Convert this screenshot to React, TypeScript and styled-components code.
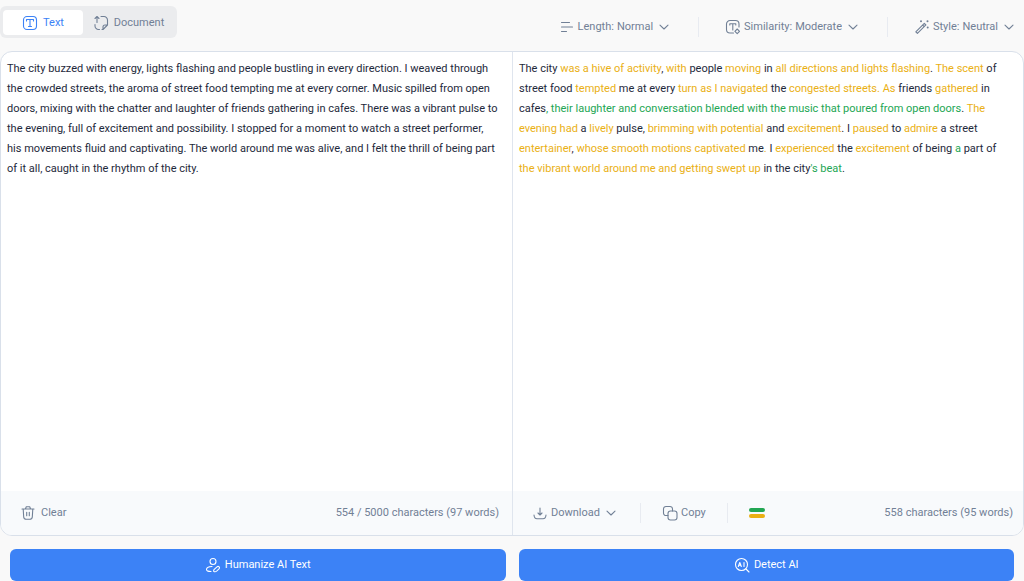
import React from "react";
import styled, { createGlobalStyle } from "styled-components";

const GlobalStyle = createGlobalStyle`
  *, *::before, *::after { box-sizing: border-box; }
  body {
    margin: 0;
    background: #f9f9f9;
    color: #1e293b;
    font-family: Roboto, "Liberation Sans", sans-serif;
    font-size: 11px;
    line-height: 20px;
  }
  button, select, textarea { font: inherit; color: inherit; }
`;

const Page = styled.main`
  display: flex;
  flex-direction: column;
  min-height: 100vh;
`;

const Toolbar = styled.header`
  display: flex;
  justify-content: space-between;
  align-items: flex-start;
  height: 51px;
  padding: 6px 7px 0 0;
  color: #718096;
`;

const Tabs = styled.div`
  display: flex;
  padding: 4px 3px 3px;
  border-radius: 6px;
  background: #ebecee;
`;

const Tab = styled.button<{ $active?: boolean }>`
  display: flex;
  align-items: center;
  justify-content: center;
  gap: 5px;
  height: 25px;
  width: ${(p) => (p.$active ? "80px" : "91px")};
  padding: 0;
  border: 0;
  border-radius: 4px;
  background: ${(p) => (p.$active ? "#ffffff" : "transparent")};
  color: ${(p) => (p.$active ? "#3c82f6" : "#718096")};
  cursor: pointer;
`;

const Filters = styled.div`
  display: flex;
  align-items: center;
  padding-top: 11px;
`;

const Filter = styled.label`
  display: flex;
  align-items: center;
  gap: 3px;
`;

const Select = styled.select`
  appearance: none;
  field-sizing: content;
  height: 20px;
  padding: 0;
  border: 0;
  background: transparent;
  cursor: pointer;
`;

const Divider = styled.span<{ $gap: number }>`
  width: 1px;
  height: 20px;
  margin: 0 ${(p) => p.$gap}px;
  background: #e8ebf1;
`;

const Icon = styled.svg`
  flex: none;
  width: 16px;
  height: 16px;
  fill: none;
  stroke: currentColor;
  stroke-width: 1.1;
  stroke-linecap: round;
  stroke-linejoin: round;
`;

const Card = styled.section`
  flex: 1;
  display: grid;
  grid-template-columns: 1fr 1fr;
  overflow: hidden;
  border: 1px solid #d9e0ea;
  border-radius: 12px;
  background: #ffffff;
`;

const Pane = styled.div`
  display: flex;
  flex-direction: column;
  min-width: 0;
  & + & { border-left: 1px solid #dfe5ee; }
`;

const Editor = styled.textarea`
  flex: 1;
  width: 100%;
  padding: 7px 13px 7px 6px;
  border: 0;
  outline: 0;
  resize: none;
  background: transparent;
`;

const Result = styled.p`
  flex: 1;
  margin: 0;
  padding: 7px 13px 7px 6px;
`;

const Mark = styled.span<{ $tone: "amber" | "green" }>`
  color: ${(p) => (p.$tone === "amber" ? "#eab014" : "#22a653")};
`;

const Footer = styled.footer<{ $end: number }>`
  display: flex;
  align-items: center;
  height: 44px;
  padding: 0 ${(p) => p.$end}px 0 19px;
  background: #f8fafc;
  color: #718096;
`;

const Action = styled.button<{ $gap?: number }>`
  display: flex;
  align-items: center;
  gap: ${(p) => p.$gap ?? 3}px;
  padding: 0;
  border: 0;
  background: transparent;
  cursor: pointer;
`;

const Count = styled.span`
  margin-left: auto;
`;

const Legend = styled.span`
  display: grid;
  gap: 2px;
  width: 16px;
`;

const Bar = styled.i<{ $color: string }>`
  height: 4px;
  border-radius: 2px;
  background: ${(p) => p.$color};
`;

const Buttons = styled.div`
  display: grid;
  grid-template-columns: 1fr 1fr;
  gap: 13px;
  padding: 13px 10px 0;
`;

const Primary = styled.button`
  display: flex;
  align-items: center;
  justify-content: center;
  gap: 4px;
  height: 32px;
  border: 0;
  border-radius: 6px;
  background: #3c82f6;
  color: #ffffff;
  cursor: pointer;
`;

const Chevron = () => (
  <Icon viewBox="0 0 16 16" aria-hidden="true">
    <path d="M4 6.2 8 10l4-3.8" />
  </Icon>
);

const source =
  "The city buzzed with energy, lights flashing and people bustling in every direction. I weaved through the crowded streets, the aroma of street food tempting me at every corner. Music spilled from open doors, mixing with the chatter and laughter of friends gathering in cafes. There was a vibrant pulse to the evening, full of excitement and possibility. I stopped for a moment to watch a street performer, his movements fluid and captivating. The world around me was alive, and I felt the thrill of being part of it all, caught in the rhythm of the city.";

type Run = [string, ("amber" | "green")?];

const result: Run[] = [
  ["The city "], ["was a hive of activity", "amber"], [", "], ["with", "amber"], [" people "],
  ["moving", "amber"], [" in "], ["all directions and lights flashing", "amber"], [". "],
  ["The scent", "amber"], [" of street food "], ["tempted", "amber"], [" me at every "],
  ["turn as I navigated", "amber"], [" the "], ["congested streets. As", "amber"], [" friends "],
  ["gathered", "amber"], [" in cafes"],
  [", their laughter and conversation blended with the music that poured from open doors", "green"],
  [". "], ["The evening had", "amber"], [" a "], ["lively", "amber"], [" pulse, "],
  ["brimming with potential", "amber"], [" and "], ["excitement", "amber"], [". I "],
  ["paused", "amber"], [" to "], ["admire", "amber"], [" a street "], ["entertainer", "amber"],
  [", "], ["whose smooth motions captivated", "amber"], [" me"], [".", "amber"], [" I "],
  ["experienced", "amber"], [" the "], ["excitement", "amber"], [" of being "], ["a", "green"],
  [" part of "], ["the vibrant world around me and getting swept up", "amber"],
  [" in the city"], ["'s beat", "green"], ["."],
];

export default function App() {
  return (
    <Page>
      <GlobalStyle />
      <Toolbar>
        <Tabs role="tablist">
          <Tab $active role="tab" aria-selected="true">
            <Icon viewBox="0 0 16 16" aria-hidden="true">
              <rect x="1.5" y="1.5" width="13" height="13" rx="3.5" />
              <path d="M4.5 6V4.5h7V6M8 4.5v7M6.5 11.5h3" />
            </Icon>
            Text
          </Tab>
          <Tab role="tab" aria-selected="false">
            <Icon viewBox="0 0 16 16" aria-hidden="true">
              <path d="M4 7.5v-6M2 3.5l2-2 2 2M8 1.5h3A3.5 3.5 0 0 1 14.5 5v5L10 14.5H9M2 9.5V11a3.5 3.5 0 0 0 3.5 3.5h1M14.5 10H12a2 2 0 0 0-2 2v2.5" />
            </Icon>
            Document
          </Tab>
        </Tabs>
        <Filters>
          <Filter>
            <Icon viewBox="0 0 16 16" aria-hidden="true">
              <path d="M2.5 3.5h8M2.5 8h11M2.5 12.5h5" />
            </Icon>
            <span>Length:</span>
            <Select defaultValue="Normal"><option>Normal</option></Select>
            <Chevron />
          </Filter>
          <Divider $gap={26} />
          <Filter>
            <Icon viewBox="0 0 16 16" aria-hidden="true">
              <path d="M8.5 14H5a3.5 3.5 0 0 1-3.5-3.5V5A3.5 3.5 0 0 1 5 1.5h5.5A3.5 3.5 0 0 1 14 5v3M4.8 6V4.7h6V6M7.8 4.7V11" />
              <path d="m12.2 10 2.3 2.3-2.3 2.3-2.3-2.3z" />
            </Icon>
            <span>Similarity:</span>
            <Select defaultValue="Moderate"><option>Moderate</option></Select>
            <Chevron />
          </Filter>
          <Divider $gap={26} />
          <Filter>
            <Icon viewBox="0 0 16 16" aria-hidden="true">
              <path d="m1.8 12.8 8.5-8.5 1.6 1.6-8.5 8.5zM8.6 6l1.6 1.6" />
              <path strokeWidth="2" d="M7 2.3h.01M13.5 2.2h.01M13.7 8.5h.01" />
            </Icon>
            <span>Style:</span>
            <Select defaultValue="Neutral"><option>Neutral</option></Select>
            <Chevron />
          </Filter>
        </Filters>
      </Toolbar>

      <Card>
        <Pane>
          <Editor aria-label="Source text" spellCheck={false} defaultValue={source} />
          <Footer $end={13}>
            <Action $gap={5}>
              <Icon viewBox="0 0 16 16" aria-hidden="true">
                <path d="M2 4h12M5.5 3.8l.8-2h3.4l.8 2M3.2 4l.5 8a2.5 2.5 0 0 0 2.5 2.3h3.6a2.5 2.5 0 0 0 2.5-2.3l.5-8M6.7 7.2v3.6M9.3 7.2v3.6" />
              </Icon>
              Clear
            </Action>
            <Count>554 / 5000 characters (97 words)</Count>
          </Footer>
        </Pane>
        <Pane>
          <Result>
            {result.map(([text, tone], i) =>
              tone ? <Mark key={i} $tone={tone}>{text}</Mark> : text
            )}
          </Result>
          <Footer $end={10}>
            <Action aria-haspopup="menu">
              <Icon viewBox="0 0 16 16" aria-hidden="true">
                <path d="M8 3v7M6 8l2 2 2-2M2 10c.2 2.5 1 3.7 3 3.7h6c2 0 2.8-1.2 3-3.7" />
              </Icon>
              Download
              <Chevron />
            </Action>
            <Divider $gap={21} />
            <Action>
              <Icon viewBox="0 0 16 16" aria-hidden="true">
                <rect x="6" y="6" width="9" height="9" rx="2.5" />
                <path d="M6 10.5H4A2.5 2.5 0 0 1 1.5 8V4A2.5 2.5 0 0 1 4 1.5h4A2.5 2.5 0 0 1 10.5 4v2" />
              </Icon>
              Copy
            </Action>
            <Divider $gap={21} />
            <Legend>
              <Bar $color="#22a653" />
              <Bar $color="#eab014" />
            </Legend>
            <Count>558 characters (95 words)</Count>
          </Footer>
        </Pane>
      </Card>

      <Buttons>
        <Primary>
          <Icon viewBox="0 0 16 16" aria-hidden="true">
            <circle cx="8" cy="4.5" r="3" />
            <path d="M7 9.5c-3 .1-5.5 1.3-5.5 3 0 1.3 2 2 4.5 2M9 14.5c-.8-.8-.3-1.5.5-2.3l2.5-2.3c.8-.7 1.6-.5 2.1 0s.6 1.3-.1 2l-2.4 2.2c-.8.7-1.7.9-2.6.4z" />
          </Icon>
          Humanize AI Text
        </Primary>
        <Primary>
          <Icon viewBox="0 0 16 16" aria-hidden="true">
            <circle cx="7.5" cy="7.5" r="6" />
            <path d="m12 12 3 3M4.3 9.5l1.5-4 1.5 4M4.8 8.3h2M10 5.5v4" />
          </Icon>
          Detect AI
        </Primary>
      </Buttons>
    </Page>
  );
}
